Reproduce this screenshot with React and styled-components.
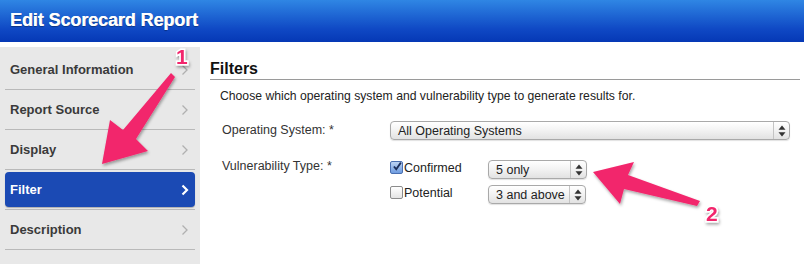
import styled, { createGlobalStyle } from 'styled-components';

// Global -----------------------------------------------------
const GlobalStyle = createGlobalStyle`
  html, body {
    margin: 0;
    padding: 0;
    background: #fff;
    font-family: "Liberation Sans", Arial, sans-serif;
  }
  #root {
    position: relative;
    width: 804px;
    height: 264px;
    overflow: hidden;
  }
`

const menu = [
  { label: 'General Information' },
  { label: 'Report Source' },
  { label: 'Display' },
  { label: 'Filter', active: true },
  { label: 'Description' },
]

function Chevron({ active }) {
  return (
    <svg width="8" height="12" viewBox="0 0 8 12">
      <polyline
        points="1.5,1.5 6,6 1.5,10.5"
        fill="none"
        stroke={active ? '#fff' : '#b0b0b0'}
        strokeWidth={active ? 2.2 : 1.3}
      />
    </svg>
  )
}

function Select({ width, children }) {
  return (
    <SelectBox $width={width}>
      <span>{children}</span>
      <SelectArrows>
        <svg width="8" height="12" viewBox="0 0 8 12">
          <polygon points="4,0.5 7.5,4.8 0.5,4.8" fill="#333" />
          <polygon points="0.5,7.2 7.5,7.2 4,11.5" fill="#333" />
        </svg>
      </SelectArrows>
    </SelectBox>
  )
}

function Check({ checked, label }) {
  return (
    <CheckLabel>
      <CheckBox $checked={checked}>
        {checked && (
          <svg width="13" height="13" viewBox="0 0 13 13">
            <polyline points="2.5,6.5 5.5,10 11.5,1.5" fill="none" stroke="#1d2f5a" strokeWidth="2.4" />
          </svg>
        )}
      </CheckBox>
      {label}
    </CheckLabel>
  )
}

export default function App() {
  return <>
    <GlobalStyle />
    <Header>Edit Scorecard Report</Header>
    <Body>
      <Sidebar>
        {menu.map((m) => (
          <MenuItem key={m.label}>
            <MenuLink $active={m.active}>
              {m.label}
              <Chevron active={m.active} />
            </MenuLink>
          </MenuItem>
        ))}
      </Sidebar>
      <Main>
        <SectionTitle>Filters</SectionTitle>
        <Intro>Choose which operating system and vulnerability type to generate results for.</Intro>
        <FormRow>
          <FieldLabel>Operating System: *</FieldLabel>
          <Select width={400}>All Operating Systems</Select>
        </FormRow>
        <FormRow>
          <FieldLabel>Vulnerability Type: *</FieldLabel>
          <TypeGrid>
            <Check checked label="Confirmed" />
            <Select width={99}>5 only</Select>
            <Check label="Potential" />
            <Select width={98}>3 and above</Select>
          </TypeGrid>
        </FormRow>
      </Main>
    </Body>

    <Annotations width="804" height="264" viewBox="0 0 804 264">
      <defs>
        <filter id="shadow" x="-20%" y="-20%" width="140%" height="140%">
          <feDropShadow dx="1" dy="2" stdDeviation="1.5" floodColor="#000" floodOpacity="0.35" />
        </filter>
      </defs>
      <g filter="url(#shadow)" fill="#f2266c">
        <polygon points="171,73 175,77 136,139 148,151 102,164 110,120 123,130" />
        <polygon points="593,172 634,162 628,175 700,201 697,206 624,189 620,204" />
      </g>
      <g filter="url(#shadow)">
        <AnnotationNumber x="176" y="64">1</AnnotationNumber>
        <AnnotationNumber x="706" y="221">2</AnnotationNumber>
      </g>
    </Annotations>
  </>
}

// Styled Components -----------------------------------------
const Header = styled.div`
  height: 42px;
  box-sizing: border-box;
  padding: 10px 0 0 10px;
  background: linear-gradient(#2f86e4, #0f48c4 70%, #0538b5);
  color: #fff;
  font-size: 18px;
  font-weight: 700;
  letter-spacing: -0.1px;
  text-shadow: 0 1px 1px rgba(0, 0, 0, 0.35), 0.3px 0 0 #fff;
`

const Body = styled.div`
  display: flex;
  margin-top: 5px;
  height: 217px;
`

const Sidebar = styled.ul`
  list-style: none;
  margin: 0;
  padding: 3px 0 0 0;
  width: 200px;
  background: #e8e8e8;
  flex-shrink: 0;
`

const MenuItem = styled.li`
  height: 40px;
  box-sizing: border-box;
  margin: 0 5px;
  padding: 2px 0 3px;
  border-bottom: 1px solid #b9b9b9;
`

const MenuLink = styled.div`
  height: 35px;
  display: flex;
  align-items: center;
  justify-content: space-between;
  padding: 0 6px 0 5px;
  border-radius: 4px;
  font-size: 13px;
  font-weight: 700;
  color: ${p => (p.$active ? '#fff' : '#3a3a3a')};
  background: ${p => (p.$active ? '#1b4ab4' : 'transparent')};
  box-shadow: ${p => (p.$active ? '0 1px 1px rgba(0,0,0,0.25)' : 'none')};
`

const Main = styled.div`
  flex: 1;
  padding: 13px 4px 0 10px;
  color: #222;
`

const SectionTitle = styled.h2`
  margin: 0;
  padding-bottom: 1px;
  font-size: 16px;
  font-weight: 700;
  color: #111;
  border-bottom: 1px solid #9a9a9a;
`

const Intro = styled.p`
  margin: 9px 0 0 10px;
  font-size: 12.2px;
  color: #222;
`

const FormRow = styled.div`
  display: flex;
  align-items: flex-start;
  margin: 18px 0 0 12px;

  & + & {
    margin-top: 17px;
  }
`

const FieldLabel = styled.div`
  width: 168px;
  flex-shrink: 0;
  padding-top: 2px;
  font-size: 12.5px;
  color: #333;
`

const TypeGrid = styled.div`
  display: grid;
  grid-template-columns: 98px auto;
  grid-auto-rows: 25px;
  align-items: center;
  margin-top: 0;
`

const SelectBox = styled.div`
  width: ${p => p.$width}px;
  height: 19px;
  box-sizing: border-box;
  display: flex;
  align-items: center;
  justify-content: space-between;
  border: 1px solid #a9a9a9;
  border-radius: 4px;
  background: linear-gradient(#ffffff, #f2f2f2 50%, #e2e2e2);
  box-shadow: 0 1px 1px rgba(0, 0, 0, 0.12);
  font-size: 12.5px;
  color: #222;

  span {
    padding-left: 7px;
    white-space: nowrap;
  }
`

const SelectArrows = styled.div`
  width: 15px;
  height: 100%;
  display: flex;
  align-items: center;
  justify-content: center;
  border-left: 1px solid #c4c4c4;
`

const CheckLabel = styled.label`
  display: flex;
  align-items: center;
  margin-bottom: 4px;
  font-size: 12.5px;
  color: #222;
`

const CheckBox = styled.span`
  width: 11px;
  height: 11px;
  margin-right: 1px;
  display: inline-flex;
  align-items: center;
  justify-content: center;
  border: 1px solid ${p => (p.$checked ? '#4a6fb0' : '#8c8c8c')};
  border-radius: 2px;
  background: ${p => (p.$checked ? 'linear-gradient(#bcd3f3, #6e9ce0)' : 'linear-gradient(#fff, #e4e4e4)')};
  overflow: visible;

  svg {
    margin: -3px 0 0 1px;
  }
`

const Annotations = styled.svg`
  position: absolute;
  top: 0;
  left: 0;
  pointer-events: none;
`

const AnnotationNumber = styled.text`
  font-family: "Liberation Sans", Arial, sans-serif;
  font-size: 21px;
  font-weight: 700;
  fill: #f2266c;
  stroke: #fff;
  stroke-width: 3px;
  paint-order: stroke;
`
